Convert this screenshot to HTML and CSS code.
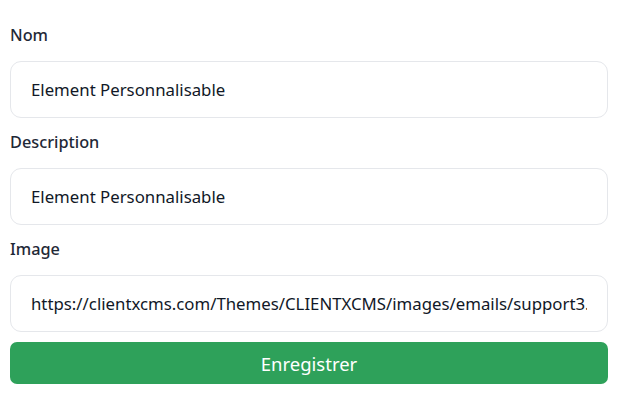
FILE: index.html
```html
<!DOCTYPE html>
<html lang="fr">
<head>
<meta charset="utf-8">
<link rel="stylesheet" href="styles.css">
</head>
<body>
<form class="form">
  <div class="field">
    <label class="label" for="nom">Nom</label>
    <input class="input" id="nom" type="text" value="Element Personnalisable">
  </div>
  <div class="field">
    <label class="label" for="desc">Description</label>
    <input class="input" id="desc" type="text" value="Element Personnalisable">
  </div>
  <div class="field">
    <label class="label" for="img">Image</label>
    <input class="input" id="img" type="text" value="https://clientxcms.com/Themes/CLIENTXCMS/images/emails/support3.png">
  </div>
  <button class="btn" type="button">Enregistrer</button>
</form>
</body>
</html>
```
FILE: styles.css
```css
* { box-sizing: border-box; }
body {
  margin: 0;
  background: #ffffff;
  font-family: "Noto Sans", "Open Sans", sans-serif;
  color: #1f2937;
}
.form {
  padding: 24px 10px 0 10px;
  display: flex;
  flex-direction: column;
}
.field {
  display: flex;
  flex-direction: column;
}
.field + .field {
  margin-top: 13px;
}
.label {
  font-size: 16.3px;
  font-weight: 500;
  line-height: 22px;
  color: #1f2937;
  margin-bottom: 15px;
}
.input {
  height: 57px;
  width: 100%;
  border: 1px solid #e5e7eb;
  border-radius: 11px;
  padding: 0 20px;
  font-family: inherit;
  font-size: 16.8px;
  color: #111827;
  background: #fff;
  outline: none;
}
.btn {
  margin-top: 10px;
  height: 42px;
  width: 100%;
  border: none;
  border-radius: 7px;
  background: #2ea15a;
  color: #ffffff;
  font-family: inherit;
  font-size: 18.5px;
}
```
